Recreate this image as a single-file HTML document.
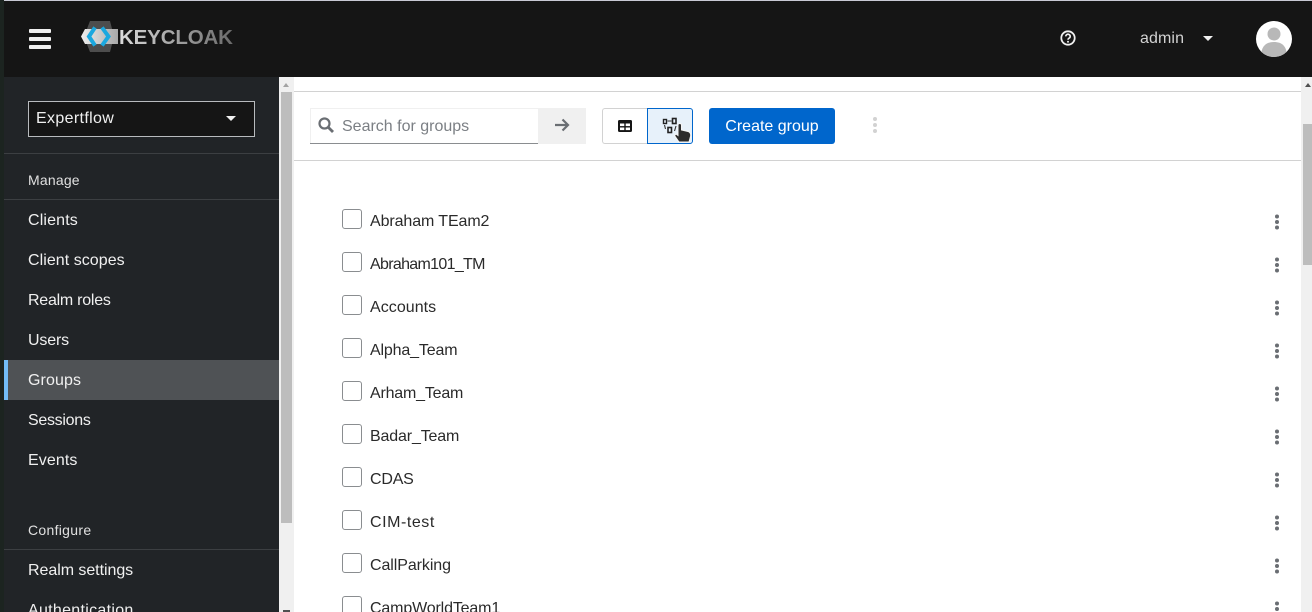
<!DOCTYPE html>
<html><head><meta charset="utf-8"><title>Keycloak Groups</title>
<style>
html,body{margin:0;padding:0;width:1312px;height:612px;overflow:hidden;background:#fff;font-family:"Liberation Sans",sans-serif;}
body{position:relative;}
.a{position:absolute;}
.t{position:absolute;white-space:nowrap;font-size:16px;line-height:20px;}
.nav{color:#f0f0f0;left:28px;}
.row{color:#2a2a2a;left:370px;}
.cb{position:absolute;left:342px;width:18px;height:18px;border:1px solid #8a8d90;border-radius:3px;background:#fff;}
.k{position:absolute;left:1275px;width:4px;height:4px;border-radius:2px;background:#6a6e73;box-shadow:0 -5.5px 0 #6a6e73,0 5.5px 0 #6a6e73;}
</style></head><body>
<div class="a" style="left:0;top:0;width:4px;height:612px;background:#1c2420"></div>
<div class="a" style="left:4px;top:0;width:1308px;height:1px;background:#c8c9d4"></div>
<div class="a" style="left:4px;top:1px;width:1308px;height:76px;background:#151515"></div>
<div class="a" style="left:29px;top:29px;width:22px;height:4px;background:#f0f0f0;border-radius:1px"></div>
<div class="a" style="left:29px;top:37px;width:22px;height:4px;background:#f0f0f0;border-radius:1px"></div>
<div class="a" style="left:29px;top:45px;width:22px;height:4px;background:#f0f0f0;border-radius:1px"></div>
<svg class="a" style="left:80px;top:20px" width="40" height="34" viewBox="0 0 40 34">
<defs><linearGradient id="g" x1="0" x2="1"><stop offset="0" stop-color="#efefef"/><stop offset="1" stop-color="#a8a8a8"/></linearGradient></defs>
<polygon points="10,1 30,1 34,16.500 30,32 10,32 4,16.500" fill="#4d4d4d"/>
<polygon points="1,16.500 5,9 38,9 38,24 5,24" fill="url(#g)"/>
<path d="M15 7.500 L9 16.500 L15 25.500" fill="none" stroke="#1ba8df" stroke-width="4"/>
<path d="M22 7.500 L28.500 16.500 L22 25.500" fill="none" stroke="#1ba8df" stroke-width="4"/>
</svg>
<div class="t" style="left:119px;top:27px;font-size:20.5px;line-height:22px;font-weight:bold;letter-spacing:-.15px;background:linear-gradient(90deg,#dcdcdc,#6a6a6a);-webkit-background-clip:text;background-clip:text;color:transparent">KEYCLOAK</div>
<svg class="a" style="left:1060px;top:30px" width="16" height="16" viewBox="0 0 16 16"><circle cx="8" cy="8" r="6.7" fill="none" stroke="#f0f0f0" stroke-width="1.8"/><path d="M5.800 6.400a2.200 2.100 0 1 1 3.400 1.700c-.8.5-1.200.8-1.200 1.600" fill="none" stroke="#f0f0f0" stroke-width="1.600"/><circle cx="8" cy="11.700" r="1" fill="#f0f0f0"/></svg>
<div class="t" style="left:1140px;top:29px;color:#d2d2d2;letter-spacing:.1px">admin</div>
<div class="a" style="left:1203px;top:36px;border-left:5px solid transparent;border-right:5px solid transparent;border-top:5px solid #f0f0f0"></div>
<svg class="a" style="left:1256px;top:21px" width="36" height="36" viewBox="0 0 36 36"><defs><clipPath id="c"><circle cx="18" cy="18" r="18"/></clipPath></defs><circle cx="18" cy="18" r="18" fill="#fff"/><g clip-path="url(#c)"><circle cx="18" cy="13" r="6.500" fill="#b8b8b8"/><path d="M5 36 C5 25 10 21 18 21 C26 21 31 25 31 36Z" fill="#b8b8b8"/></g></svg>

<div class="a" style="left:4px;top:77px;width:275px;height:535px;background:#212427"></div>
<div class="a" style="left:28px;top:101px;width:225px;height:34px;background:#151515;border:1px solid #b8bbbe"></div>
<div class="t" style="left:36px;top:109px;color:#f0f0f0;letter-spacing:.35px">Expertflow</div>
<div class="a" style="left:226px;top:116px;border-left:5px solid transparent;border-right:5px solid transparent;border-top:5px solid #f0f0f0"></div>
<div class="a" style="left:4px;top:153px;width:275px;height:1px;background:#3c3f42"></div>
<div class="t nav" style="top:170px;font-size:14px;letter-spacing:.2px;color:#e0e0e0">Manage</div>
<div class="a" style="left:4px;top:199px;width:275px;height:1px;background:#3c3f42"></div>
<div class="t nav" style="top:211px;letter-spacing:.15px">Clients</div>
<div class="t nav" style="top:251px;letter-spacing:.05px">Client scopes</div>
<div class="t nav" style="top:291px;letter-spacing:-.25px">Realm roles</div>
<div class="t nav" style="top:331px;letter-spacing:-.15px">Users</div>
<div class="a" style="left:4px;top:360px;width:275px;height:40px;background:#4f5255"></div>
<div class="a" style="left:4px;top:360px;width:4px;height:40px;background:#73bcf7"></div>
<div class="t nav" style="top:371px;letter-spacing:.1px">Groups</div>
<div class="t nav" style="top:411px;letter-spacing:-.3px">Sessions</div>
<div class="t nav" style="top:451px;letter-spacing:.1px">Events</div>
<div class="t nav" style="top:520px;font-size:14px;letter-spacing:.3px;color:#e0e0e0">Configure</div>
<div class="a" style="left:4px;top:549px;width:275px;height:1px;background:#3c3f42"></div>
<div class="t nav" style="top:561px;letter-spacing:-.05px">Realm settings</div>
<div class="t nav" style="top:601px;letter-spacing:.3px">Authentication</div>

<div class="a" style="left:279px;top:77px;width:15px;height:535px;background:#f0f0f0"></div>
<div class="a" style="left:281px;top:92px;width:11px;height:431px;background:#bdbdbd"></div>
<div class="a" style="left:283px;top:83px;border-left:3.500px solid transparent;border-right:3.500px solid transparent;border-bottom:4px solid #a3a3a3"></div>
<div class="a" style="left:283px;top:610px;width:7px;height:2px;background:#505050"></div>

<div class="a" style="left:294px;top:91px;width:1007px;height:1px;background:#d2d2d2"></div>
<div class="a" style="left:294px;top:160px;width:1007px;height:1px;background:#d2d2d2"></div>

<div class="a" style="left:310px;top:108px;width:228px;height:35px;background:#fff;border-top:1px solid #f0f0f0;border-left:1px solid #f0f0f0;box-sizing:border-box"></div>
<div class="a" style="left:310px;top:143px;width:228px;height:1px;background:#8a8d90"></div>
<svg class="a" style="left:318px;top:117px" width="16" height="16" viewBox="0 0 16 16"><circle cx="6.500" cy="6.500" r="5" fill="none" stroke="#6a6e73" stroke-width="2.200"/><path d="M10.500 10.500L15 15" stroke="#6a6e73" stroke-width="2.800"/></svg>
<div class="t" style="left:342px;top:117px;color:#7b7f84;letter-spacing:0">Search for groups</div>
<div class="a" style="left:538px;top:108px;width:48px;height:36px;background:#f0f0f0"></div>
<svg class="a" style="left:554px;top:118px" width="16" height="14" viewBox="0 0 16 14"><path d="M1 7H14M8.500 1.500L14 7L8.500 12.500" fill="none" stroke="#6a6e73" stroke-width="2.200"/></svg>

<div class="a" style="left:602px;top:108px;width:46px;height:36px;box-sizing:border-box;border:1px solid #d2d2d2;border-right:0;border-radius:3px 0 0 3px;background:#fff"></div>
<svg class="a" style="left:618px;top:120px" width="14" height="12" viewBox="0 0 14 12"><rect width="14" height="12" rx="1.500" fill="#151515"/><rect x="2" y="3.500" width="4.300" height="2.600" fill="#fff"/><rect x="7.700" y="3.500" width="4.300" height="2.600" fill="#fff"/><rect x="2" y="7.500" width="4.300" height="2.600" fill="#fff"/><rect x="7.700" y="7.500" width="4.300" height="2.600" fill="#fff"/></svg>
<div class="a" style="left:647px;top:108px;width:46px;height:36px;box-sizing:border-box;border:1px solid #06c;border-radius:0 3px 3px 0;background:#e7f1fa"></div>
<svg class="a" style="left:662px;top:117px" width="30" height="26" viewBox="0 0 30 26">
<rect x="1.500" y="2.500" width="3" height="4" fill="none" stroke="#222" stroke-width="1.400"/><rect x="10.500" y="1.500" width="3.500" height="5" fill="none" stroke="#222" stroke-width="1.600"/><rect x="6" y="10.500" width="3.500" height="5" fill="none" stroke="#222" stroke-width="1.600"/><path d="M5.500 4H9.500M2.500 8L3.500 12M14 9L12.500 14" stroke="#333" stroke-width="1.100"/>
<path d="M17 25L12.500 18.500L14 17L16 18.500V8C16 6 19.500 6 19.500 8V13L26 14.500C28.500 15.200 29 17 28.500 19.500L27 25Z" fill="#2b2b2b" stroke="#f5f5f5" stroke-width="1"/></svg>
<div class="a" style="left:709px;top:108px;width:126px;height:36px;background:#06c;border-radius:3px"></div>
<div class="t" style="left:709px;top:117px;width:126px;text-align:center;color:#fff;letter-spacing:0">Create group</div>
<div class="a" style="left:873px;top:123px;width:4px;height:4px;border-radius:2px;background:#d2d2d2;box-shadow:0 -6px 0 #d2d2d2,0 6px 0 #d2d2d2"></div>

<div class="cb" style="top:209px"></div><div class="t row" style="top:212px;letter-spacing:-.1px">Abraham TEam2</div><div class="k" style="top:220px"></div>
<div class="cb" style="top:252px"></div><div class="t row" style="top:255px;letter-spacing:-.68px">Abraham101_TM</div><div class="k" style="top:263px"></div>
<div class="cb" style="top:295px"></div><div class="t row" style="top:298px;letter-spacing:.05px">Accounts</div><div class="k" style="top:306px"></div>
<div class="cb" style="top:338px"></div><div class="t row" style="top:341px;letter-spacing:-.15px">Alpha_Team</div><div class="k" style="top:349px"></div>
<div class="cb" style="top:381px"></div><div class="t row" style="top:384px;letter-spacing:-.2px">Arham_Team</div><div class="k" style="top:392px"></div>
<div class="cb" style="top:424px"></div><div class="t row" style="top:427px;letter-spacing:-.15px">Badar_Team</div><div class="k" style="top:435px"></div>
<div class="cb" style="top:467px"></div><div class="t row" style="top:470px;letter-spacing:-.2px">CDAS</div><div class="k" style="top:478px"></div>
<div class="cb" style="top:510px"></div><div class="t row" style="top:513px;letter-spacing:.55px">CIM-test</div><div class="k" style="top:521px"></div>
<div class="cb" style="top:553px"></div><div class="t row" style="top:556px;letter-spacing:-.08px">CallParking</div><div class="k" style="top:564px"></div>
<div class="cb" style="top:596px"></div><div class="t row" style="top:599px;letter-spacing:-.15px">CampWorldTeam1</div><div class="k" style="top:607px"></div>

<div class="a" style="left:1301px;top:77px;width:11px;height:535px;background:#f0f0f0"></div>
<div class="a" style="left:1303px;top:124px;width:9px;height:141px;background:#bdbdbd"></div>
<div class="a" style="left:1305px;top:83px;border-left:3.500px solid transparent;border-right:3.500px solid transparent;border-bottom:4px solid #505050"></div>
</body></html>
